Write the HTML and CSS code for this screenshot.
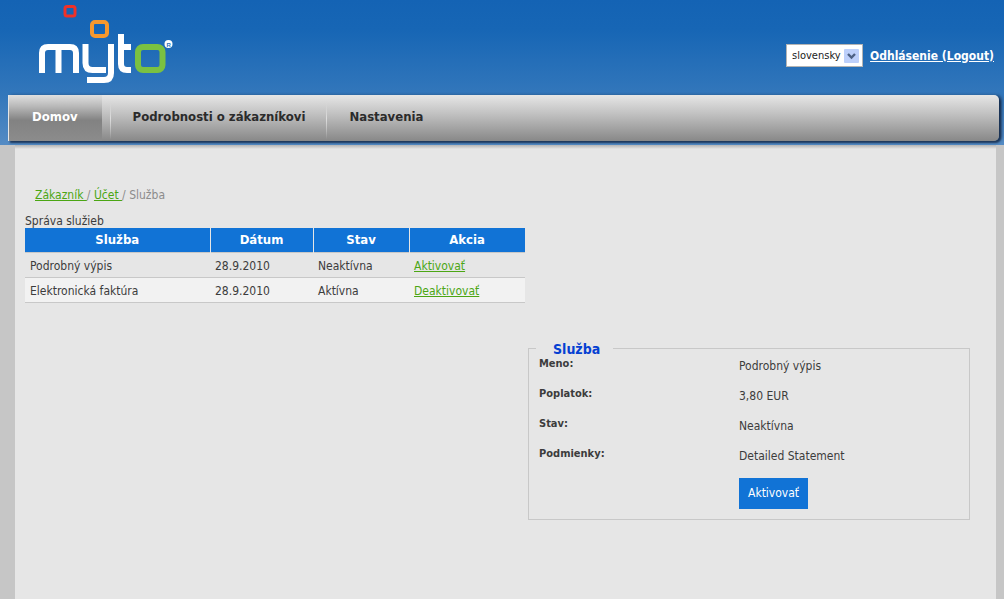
FILE: index.html
```html
<!DOCTYPE html>
<html lang="sk">
<head>
<meta charset="utf-8">
<title>myto – Služba</title>
<link rel="stylesheet" href="styles.css">
</head>
<body>
<header class="header">
  <div class="topbar">
    <svg class="logo" width="140" height="84" viewBox="36 1 140 84" role="img" aria-label="myto">
      <g fill="none" stroke="#fff" stroke-width="6">
        <path d="M42 73V53q0-6 6-6H70q6 0 6 6V73M58.500 47V73"/>
        <path d="M85.500 44V63q0 7 7 7H106M111 44V73q0 7-7 7H87"/>
        <path d="M121 34V64q0 6 6 6H131M121 47H131"/>
      </g>
      <rect x="138" y="47" width="24.500" height="23" rx="5" fill="none" stroke="#7ac142" stroke-width="6"/>
      <rect x="92" y="22" width="15" height="14" rx="3" fill="none" stroke="#f7982d" stroke-width="4"/>
      <rect x="65" y="6.500" width="10" height="9.500" rx="2" fill="none" stroke="#ee3128" stroke-width="3"/>
      <circle cx="168.500" cy="44" r="4" fill="#fff"/>
      <text class="reg" x="166.500" y="46.500">R</text>
    </svg>
    <div class="tools">
      <select class="lang" aria-label="Jazyk"><option>slovensky</option></select>
      <svg class="arrow" width="15" height="14" viewBox="0 0 15 14" aria-hidden="true">
        <rect width="15" height="14" rx="1" fill="#bdd0fb"/>
        <path d="M4 5l3.500 3.500L11 5" fill="none" stroke="#4d6185" stroke-width="2.400"/>
      </svg>
      <a class="logout" href="#">Odhlásenie (Logout)</a>
    </div>
  </div>
  <nav class="nav">
    <a class="item active" href="#">Domov</a>
    <a class="item" href="#">Podrobnosti o zákazníkovi</a>
    <a class="item" href="#">Nastavenia</a>
  </nav>
</header>
<main class="page">
  <div class="crumbs"><a href="#">Zákazník </a>/ <a href="#">Účet </a>/ Služba</div>
  <table class="services">
    <caption>Správa služieb</caption>
    <thead><tr><th class="c1">Služba</th><th class="c2">Dátum</th><th class="c3">Stav</th><th class="c4">Akcia</th></tr></thead>
    <tbody>
      <tr><td>Podrobný výpis</td><td>28.9.2010</td><td>Neaktívna</td><td><a href="#">Aktivovať</a></td></tr>
      <tr><td>Elektronická faktúra</td><td>28.9.2010</td><td>Aktívna</td><td><a href="#">Deaktivovať</a></td></tr>
    </tbody>
  </table>
  <fieldset class="detail">
    <legend>Služba</legend>
    <dl>
      <dt>Meno:</dt><dd>Podrobný výpis</dd>
      <dt>Poplatok:</dt><dd>3,80 EUR</dd>
      <dt>Stav:</dt><dd>Neaktívna</dd>
      <dt>Podmienky:</dt><dd>Detailed Statement</dd>
    </dl>
    <button class="btn" type="button">Aktivovať</button>
  </fieldset>
</main>
</body>
</html>
```
FILE: styles.css
```css
* { box-sizing: border-box; }
body {
  margin: 0;
  min-height: 100vh;
  display: flex;
  flex-direction: column;
  background: #c6c6c6;
  color: #3c3c3c;
  font: 12px/16px Tahoma, "DejaVu Sans Condensed", "DejaVu Sans", sans-serif;
}
a { color: #4ba614; }
.header {
  height: 145px;
  padding: 0 5px 0 8px;
  background: linear-gradient(#1463b4 0, #1766b5 30px, #3377bb 95px, #548bc4 145px);
}
.topbar {
  height: 95px;
  padding: 1px 5px 0 28px;
  display: flex;
  justify-content: space-between;
  align-items: flex-start;
}
.logo { display: block; }
.reg { font: bold 6px "Liberation Sans", sans-serif; fill: #2a70b8; }
.tools {
  display: grid;
  grid-template-columns: 77px auto;
  column-gap: 7px;
  align-items: center;
  padding-top: 43px;
}
.lang {
  grid-area: 1 / 1;
  appearance: none;
  height: 23px;
  width: 77px;
  padding: 0 5px;
  border: 1px solid #b4b4b4;
  border-radius: 0;
  background: #fff;
  color: #222;
  font: 11px "DejaVu Sans Condensed", sans-serif;
}
.arrow {
  grid-area: 1 / 1;
  justify-self: end;
  margin-right: 4px;
  pointer-events: none;
}
.logout { color: #fff; font-weight: bold; }
.nav {
  position: relative;
  z-index: 1;
  display: flex;
  height: 46px;
  border-left: 1px solid #e6e6e6;
  border-radius: 0 5px 5px 0;
  background: linear-gradient(#e6e6e6, #c2c2c2 40%, #888);
  box-shadow: 2px 2px 2px rgba(20, 40, 70, .8), 3px 0 3px rgba(20, 40, 70, .5);
}
.item {
  padding: 14px 21px 0 22px;
  color: #2b2b2b;
  font: bold 13px/16px "DejaVu Sans Condensed", sans-serif;
  text-decoration: none;
}
.item + .item {
  border-left: 1px solid;
  border-image: linear-gradient(transparent 15%, #ddd 50%, transparent 95%) 1;
}
.active {
  margin-right: 8px;
  padding: 14px 24px 0 23px;
  background: linear-gradient(#e0e0e0, #b8b8b8 25%, #828282 55%, #8c8c8c);
  color: #fff;
}
.page {
  flex: 1;
  margin: 0 8px 0 15px;
  padding: 42px 26px 40px 10px;
  background: linear-gradient(#b4b4b4, #e6e6e6 4px);
}
.crumbs { padding: 0 10px; color: #8c8c8c; }
.services {
  width: 500px;
  max-width: 100%;
  margin-top: 10px;
  border-collapse: collapse;
  table-layout: fixed;
}
.services caption { height: 15px; text-align: left; line-height: 16px; }
.services th {
  height: 24px;
  padding: 0;
  border-right: 1px solid #e6e6e6;
  background: #1173d6;
  color: #fff;
  font-size: 13px;
}
.services td {
  height: 25px;
  padding: 2px 5px 0;
  border-top: 1px solid #c8c8c8;
  border-bottom: 1px solid #c8c8c8;
}
.services tbody tr:nth-child(2) { background: #f2f2f2; }
.c1 { width: 185px; }
.c2 { width: 103px; }
.c3 { width: 96px; }
.c4 { width: 116px; }
.detail {
  width: 442px;
  max-width: 100%;
  margin: 38px 0 0 auto;
  padding: 0 10px 10px;
  border: 1px solid #c8c8c8;
}
.detail legend {
  margin-left: -3px;
  padding: 0 13px 0 17px;
  color: #0540d2;
  font: bold 14px/16px "DejaVu Sans Condensed", sans-serif;
}
.detail dl {
  display: grid;
  grid-template-columns: 200px 1fr;
  grid-auto-rows: 30px;
  margin: 0;
}
.detail dt { font-size: 11px; font-weight: bold; line-height: 14px; }
.detail dd { margin: 0; padding-top: 1px; }
.btn {
  display: block;
  height: 31px;
  margin: 1px 0 0 200px;
  padding: 0 9px;
  border: 0;
  background: #1173d6;
  color: #fff;
  font: 12px "DejaVu Sans Condensed", sans-serif;
}
```
